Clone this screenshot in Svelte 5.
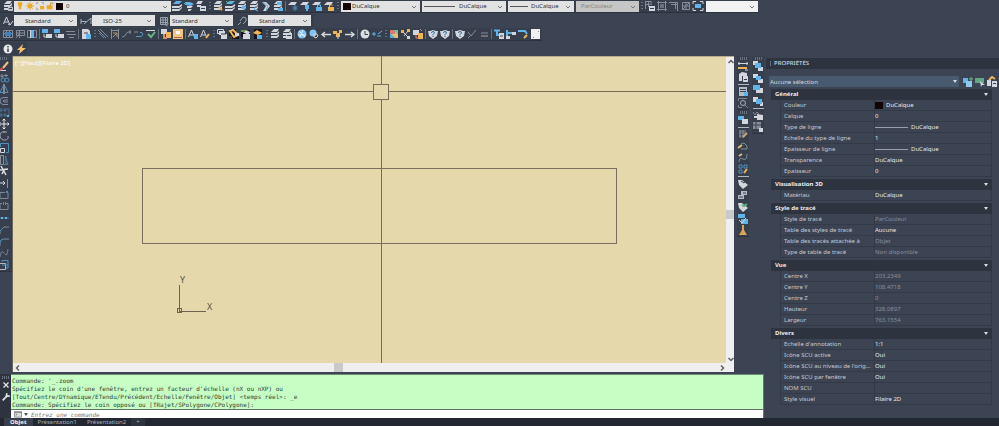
<script>
  const W = '#d3d6dc';
  const B = '#62b4e8';
  const Y = '#edb458';
  const G = '#858d9b';
  const D = '#3a4250';
  const f = (d, c = W) => `<path d="${d}" fill="${c}"/>`;
  const p = (d, c = W, w = 1) => `<path d="${d}" fill="none" stroke="${c}" stroke-width="${w}"/>`;

  const stack = f('M2 4 5 1h5L8 4zM2 5h6l2-2v2L8 7H2zM2 8h6l2-2v2l-2 2H2z');
  const sheet = f('M1 5 4 2h6L8 5z');
  const blueStack = f('M2 4 5 1h6L8 4z', B) + f('M1 6h7l3-2v2L8 8H1zM1 9h7l3-2v1l-3 3H1z');
  const shield = f('M1 3l2 0 3-1 3 1 2 0-1 5-4 3-4-3z') + p('M4.500 5q0-1.500 1.500-1.500T7.500 5L6 6.500v1M6 8v1', '#2f6fa0');
  const squares = (a, b) => f('M1 1h5v4H1z', a) + f('M6 7h5v4H6z', a) + f('M3 3h6v5H3z', b);

  const art = {
    layerProps: stack + f('M6 7h5v4H6z', '#b7bcc6') + p('M7 8.500h3', D),
    layerCur: blueStack,
    layerPrev: f('M2 2h5l4 2-3 2-5-1z', B) + f('M4 6h6L8 8H4zM5 9h4l-2 2H5z') + p('M1 3l2 2', B),
    layerState: f('M3 1h5L6 4H1zM2 5h4v2H2zM5 6h6v5H5z') + p('M6 8.500h4', D),
    layerEdit: stack + p('M7 7l3 3', Y, 2),
    layerMatch: blueStack + p('M2 1l2 2 3-2', '#62bf8d'),
    layerWalk: stack + p('M8 6l-2 3 4 2', B),
    layerBlue: stack + f('M7 5l3 2-2 3-3-2z', B),
    layerTurn: f('M2 2h4l4 4-4 5H3l3-5z') + p('M3 2l5 4-2 4', B),
    layerMerge: stack + f('M5 2h5v3H5zM6 8h5v3H6z', B),
    sheetFreeze: sheet + p('M8 5v6M5.500 6.500l5 3M10.500 6.500l-5 3', '#4c94c4'),
    sheetOff: sheet + f('M6 5h4v4H9v2H7V9H6z', B),
    sheetLock: sheet + p('M6.500 7V5h3v2', B) + f('M5 7h6v4H5z', B),
    sheetUnlock: sheet + p('M6.500 7V5h3', Y) + f('M5 7h6v4H5z', Y),
    refEdit: p('M1 1.500h6M1 4.500h5M1.500 1v8M4.500 1v6M7 1v4', G) + f('M5 6h6v5H5z') + p('M6 8.500h4', D),
    grid: p('M2.500 2.500h7v7h-7zM1 2.500h10M1 9.500h10M2.500 1v10M9.500 1v10', G) + f('M4 4h4v4H4z', '#69717f'),
    gridCorner: p('M1 2.500h9M3 4.500h7M9.500 2v9M7.500 2v7', G),
    gridX: p('M2.500 2.500h7v7h-7zM2 6h8M6 2v8M3 9l6-6', G),
    viewport: f('M3 4h6v4H3z', B) + p('M1 4V1.500h3M8 1.500h3V4M11 8v2.500H8M4 10.500H1V8'),
    textStyle: p('M1.500 9L4.500 2l3 7M3 7h3M6 9l2 1 3-4', W),
    textCheck: p('M1.500 9L4.500 2l3 7M3 7h3') + f('M7 6h4v5H7z', B),
    textPen: p('M1.500 9L4.500 2l3 7M3 7h3') + p('M7 10l3-4', Y, 2),
    dimStyle: p('M1 4v5M1 6.500h5M4 9l7-6v6', '#aeb4be'),
    tableStyle: p('M2.500 2.500h7v7h-7zM2 5h8M5 3v7M7.500 3v7M2 7.500h8', '#9ba2af') + p('M8 11l2-3', G, 2),
    mleader: p('M2 10l3-3M4 6l3-4 3 1v3L7 9', '#9ba2af'),
    table: p('M1.500 2.500h9v7h-9zM2 5.500h9M4.500 3v7M7.500 3v7', G) + f('M3 4h6v4H3z', '#3f83bb'),
    tablePen: p('M2.500 2.500h8v5h-8zM5.500 3v7M2 5h8M2 10l3-4', G),
    column: p('M1.500 2.500h9v7h-9z', G) + f('M5 2h3v8H5z', B) + p('M4.500 2v8'),
    blueBox: f('M1 1h6v4H1z', B) + f('M5 6h6v4H5z') + p('M3 6v3h2', W),
    list: p('M1 3.500h4M4 3.500h6M2 6.500h9M4 9.500h5', G),
    page: f('M2 1h6l2 2v8H2z') + p('M4 5h4', D) + f('M6 6h5v5H6z', B),
    diag: p('M1 2l8 8M3 1l8 8', G) + p('M2 5l5 5', '#4d91bf'),
    frame: p('M2.500 1v10M9.500 1v10M2 2.500h8', G) + p('M4 9l4-4M4 5h4v4', '#b3936b'),
    curve: p('M1 9Q4 9 5 6t5-2M9 2v4', G),
    arrowIn: p('M1 4h4', G) + p('M3 8.500h5q3-1 1-4H7', '#5d95bb'),
    abc: p('M1 2.500h9') + p('M3 6l3 3 4-5', '#64b883', 2),
    blockEdit: f('M1 1h6v5H1z') + f('M6 4h5v6H6z', Y) + p('M4 6v4h3', '#d58f70', 2),
    image: f('M1 1h10v10H1z', '#f1c684') + f('M4 3h4v3H4z', '#fff') + f('M2 9h8v1H2z', '#b26845'),
    pages: p('M1.500 1.500h6v4h-6z') + f('M3 3h6v4H3zM5 6h6v5H5z') + p('M5 6h5', D),
    pagesGold: f('M1 1h7v7H1zM4 8h7v3H4z', '#161616') + p('M2 3l3-1 5 5-4 2z', Y, 2) + f('M7 5h4v3H7z'),
    pagesGreen: f('M1 2h9v7H1z', '#161616') + f('M3 4l3-2 4 2-2 3zM3 6h7v5H3z') + f('M1 2h4v2H1z', '#6d9b50'),
    pagesBlue: f('M2 1h8v10H2z', '#161616') + f('M1 5l4-3 5 3-4 2z', Y) + f('M5 7h5v4H5z', B),
    cloud: stack,
    cloudBox: stack + f('M5 5h6v6H5z') + p('M6 7.500h4', D),
    globe: '<circle cx="6" cy="6" r="4.500" fill="#7fc4ee"/>' + p('M3 3l6 6M2 7h8M7 2L4 9', '#e5eef5'),
    globeLink: '<circle cx="5" cy="5" r="3.500" fill="#7fc4ee"/>' + p('M6 6l3 0 1 2-2 2-2-1z'),
    back: p('M11 6.500H2M5 4L2 6.500l3 2.500', W, 1.5),
    forward: p('M1 6.500h9M7 4l3 2.500-3 2.500', W, 1.5),
    flower: f('M1 3h4v3H1zM7 2h3v3H7zM4 5h4v4H4z', Y) + p('M6 8v3'),
    clock: '<circle cx="6" cy="6" r="4.500" fill="#dcdee2"/>' + p('M6 3v3.500h3', D),
    plusMinus: p('M1 6h4M3 4v4M6 8h4M7 6l4-3', B),
    gradient: f('M2 2h8v8H2z', '#e9bf6d') + f('M2 2h5v4H2z', '#db7771') + f('M2 5l5 5H2z', '#55aadf') + f('M6 2h4v5z', '#6dc695'),
    nodes: f('M1 2h3v3H1zM7 1h3v3H7z', Y) + p('M3 4l5 5M8 3L4 8') + f('M7 8h3v3H7z'),
    group: f('M1 2h6v5H1z') + f('M6 5h5v6H6z', Y) + p('M4 7v3h3M8 1l2 2', '#d9856f'),
    shield,
    slash: p('M2 4l3 4 5-6M2 10l2-2', G),
    equal: p('M3 5h7', G) + p('M3 8h7', '#b8a29b'),
    tree: p('M1 2.500h6M4 2v5h3', B, 2) + f('M6 5h5v6H6z') + p('M7 8h3', D),
    flow: p('M2 2v7M2 5h5', B, 2) + f('M7 4h4v3H7zM1 8h4v3H1z'),
    flowPen: p('M1 3h7l2 3', B, 2) + p('M7 10l3-3', Y, 2),
    sheetWhite: f('M2 1h9v10H2z', '#f0f0f0') + p('M9 3l1 1M4 10l1-1', G),
    info: '<circle cx="6" cy="6" r="4.500" fill="#e7e8eb"/>' + p('M6 3v1.500M6 5.500V9', D, 1.5),
    bolt: f('M8 1L2 7h3L4 11l7-6H7z', '#f5c06c'),
    pencil: p('M5 8l5-6', '#f2c27d', 2) + p('M2 10.500h6', W) + p('M2 10l3-2', '#d65345', 2),
    copy: p('M3 3h2v2H3zM8 2v3M6 3.500h4', G) + '<circle cx="5" cy="8" r="2" fill="none" stroke="#4d91bf"/><circle cx="9" cy="8" r="2" fill="none" stroke="#4d91bf"/>',
    mirror: p('M6 1v10', W) + p('M5 3L2 9.500h3M7 3l3 6.500H7', '#4d91bf'),
    offset: p('M10 2.500H5Q2 3 2 6t3 3.500h5M10 5H6q-2 1 0 2h4', '#7c91a8'),
    array: p('M2 2h2v2H2zM6 2h2v2H6zM2 7h2v2H2zM6 7h2v2H6zM9 2h2v7', '#4a7595') + f('M9 8h2v2H9z', B),
    move: p('M6 1v10M1 6h10M4.500 2.500L6 1l1.500 1.500M4.500 9.500L6 11l1.500-1.500M2.500 4.500L1 6l1.500 1.500M9.500 4.500L11 6l-1.500 1.500', '#e8e9ec'),
    rotate: p('M7 2Q2 1 2 6q1 4.500 5 4t3-4M5 2h4', '#9ea5b1'),
    scale: p('M2.500 6.500h4v4h-4z', W) + p('M2.500 5V1.500h8v9H8', '#4d91bf'),
    stretch: p('M2.500 1.500h3v9h-3z', '#8b93a0') + p('M7 2l3 8.500H5M8 2v8', '#4d7f9f'),
    trim: p('M3 1l5 9M2 5l8-1M6 5L4 9', '#e0e2e6', 1.5),
    extend: p('M2 6h5M5 4l2 2-2 2', W) + p('M9.500 2v9', '#7d9bb4'),
    breakPt: p('M7 3.500H2v6h8v-6', '#7f8795') + f('M8 2h2v2H8z', '#4d91bf'),
    breakGap: p('M4 3.500H2v6h8v-6H8', '#7f8795') + p('M5.500 2v3M7.500 2v3', '#4d91bf'),
    join: p('M1 6h10', '#4d7f9f') + f('M3 5h2v2H3zM7 5h2v2H7z', B),
    chamfer: p('M2 10V7', G) + p('M2 7l4-4', '#4d91bf') + p('M6 3h5', G),
    fillet: p('M2 10V7', G) + p('M2 7q0-4 4-4', '#4d91bf') + p('M6 3h5', G),
    blend: p('M2 10q1-7 3-5t3 3 2-6', '#6d8297'),
    explode: p('M1.500 4.500h6v6h-6z', '#b5bac4') + p('M4 3V1.500h6V9H8M4 6h6', '#4d91bf'),
    ruler: p('M1 3.500h10M2 2v3M10 2v3') + f('M1 7h9v2H1z', Y) + p('M8 10h3'),
    boxes: f('M2 3l3-2 5 1v3H5v5H2z') + f('M6 5h5v6H6z') + p('M7 8.500h3', D),
    sheetNote: f('M2 1h8v9H2z', '#b6bcc6') + p('M3 3.500h6M3 5.500h6', D) + f('M7 6h4v4H7z', B),
    lens: '<circle cx="6" cy="6" r="2.500" fill="none" stroke="#a9afba"/>' + p('M1.500 4V1.500H10M1.500 8v2.500H5M8 8l3 3', '#7c8492'),
    front: f('M1 2h6v4H1z', B) + f('M5 5h6v5H5z'),
    squaresA: squares(W, B),
    squaresB: f('M1 2h5v4H1zM6 7h5v4H6z') + f('M4 4h5v4H4z', B),
    squaresC: f('M4 5h7v5H4z') + f('M1 2h7v5H1z', B),
    squaresD: f('M1 2h5v5H1zM8 7h3v4H8z') + f('M4 4h6v5H4z', B),
    annot: p('M1 2l2 3 2-3 2 2', G) + f('M2 6h3V4l6 1v5H5V8H2z'),
    hatchBack: f('M1 1h8v7H1z', G) + p('M1 4h8M4 1v7', D) + f('M7 7h4v4H7z'),
    hatchPen: p('M2 3h7M2 5h7M2 8h6M3 2v8M6 2v8', G) + p('M6 9l4-4', '#c9a678', 2),
    polyPen: p('M4 9h6V6L7 3 4 4', G) + p('M1 8l4-3', '#e5b97d', 2),
    splinePen: p('M2 10q0-5 4-3t4-5', G) + p('M2 4l3-2', '#e5b97d', 2),
    arrayPen: p('M2 2h3v3H2zM7 2h3v3H7zM2 7h3v3H2z', '#4d91bf') + p('M7 10l3-4', Y, 2),
    tag: f('M1 2l4 0 6 5-5 4-4-4z') + p('M4 3l3 2 2-3', D),
    tagStack: f('M4 2h6v4H4zM1 6h6v4H1z', '#b5bac4') + p('M2 8h4M6 4h3', D),
    tagGreen: f('M1 2l4 0 6 5-5 4-4-4z') + p('M5 4l2 1 3-2', '#61b082', 2),
    sync: f('M1 1h7v4H1zM4 6h7v5H4z', B) + p('M2 7l3 3 4-5', W),
    broom: f('M5 1h2v5l3 5H2l3-5z', '#d9a455'),
    selAdd: f('M1 2h5v5H1z', B) + f('M4 5h6v6H4z', '#8cc9ee') + p('M9 1v4M7 3h4', '#64b883'),
    selPick: f('M1 2h9v5H1z', '#62a784') + f('M6 5l5 4-3 0-1 2z'),
    selQuick: p('M3 4l3-3 3 2', Y, 2) + f('M1 4h4v6H1zM6 5h5v6H6z') + p('M7 7.500h3', D),
    bulb: f('M3 4q0-3 3-3t3 3L7.500 7v3h-3V7z', '#eea92d'),
    sun: '<circle cx="6" cy="6" r="3" fill="#eea92d"/>' + p('M6 1v10M1 6h10M2.500 2.500l7 7M9.500 2.500l-7 7', '#eea92d'),
    vpFreeze: p('M2 4V2h2M8 2h2v2M2 8v2h2', '#8b8f96') + f('M6 6h5v4H6z', '#eea92d'),
    padlock: p('M6.500 5V2.500h3V4', '#c98a20') + f('M2 5h7v5H2z', '#eea92d'),
    close: p('M3 3l6 6M9 3L3 9', '#e3e5e9', 1.5),
    wrench: p('M2 10l5-5', '#e3e5e9', 2) + p('M7 1.500L6.500 5 10.500 5', '#e3e5e9', 2),
    prompt: '<rect x="1.500" y="2.500" width="9" height="7" fill="#ddd" stroke="#777"/>' + p('M1 3h10M3 5l1.500 1L3 7', '#666'),
    up: p('M3.500 7L6 4.500 8.500 7', '#606060', 1.5),
    down: p('M3.500 5L6 7.500 8.500 5', '#606060', 1.5),
    left: p('M7 3.500L4.500 6 7 8.500', '#606060', 1.5),
    right: p('M5 3.500L7.500 6 5 8.500', '#606060', 1.5)
  };

  // "|" draws a separator and ":" a drag grip between tool buttons
  const layerTools = 'layerCur layerPrev layerState : layerEdit layerMatch layerBlue layerWalk layerTurn layerMerge | sheetFreeze sheetOff sheetLock sheetUnlock :'.split(' ');
  const refTools = ': refEdit grid gridCorner gridX viewport'.split(' ');
  const mainTools = 'table tablePen column | blueBox blueBox list | page : diag frame curve arrowIn abc | blockEdit image | textCheck textPen : pages pagesGold pagesGreen pagesBlue : cloud cloudBox | globe globeLink back flower forward | clock plusMinus : gradient nodes group | shield shield | shield slash equal | tree flow flowPen sheetWhite'.split(' ');
  const modifyTools = 'pencil copy mirror offset array move rotate scale stretch trim extend breakPt breakGap join chamfer fillet blend explode'.split(' ');
  const inquiryTools = 'ruler boxes | sheetNote lens'.split(' ');
  const editTools = 'front | hatchPen polyPen splinePen arrayPen | tag tagStack tagGreen sync broom'.split(' ');
  const orderTools = 'squaresA squaresB squaresC squaresD | annot hatchBack'.split(' ');

  const styles = [
    { icon: 'textStyle', kind: 'style', value: 'Standard', label: 'Style de texte' },
    { icon: 'dimStyle', kind: 'style', value: 'ISO-25', label: 'Style de cote' },
    { icon: 'tableStyle', kind: 'style tight', value: 'Standard', label: 'Style de tableau' },
    { icon: 'mleader', kind: 'style', value: 'Standard', label: 'Style de ligne de repère' }
  ];

  const groups = [
    { title: 'Général', rows: [
      ['Couleur', 'DuCalque', 'swatch'],
      ['Calque', '0'],
      ['Type de ligne', 'DuCalque', 'line'],
      ['Echelle du type de ligne', '1'],
      ['Epaisseur de ligne', 'DuCalque', 'line'],
      ['Transparence', 'DuCalque'],
      ['Epaisseur', '0']
    ] },
    { title: 'Visualisation 3D', rows: [['Matériau', 'DuCalque']] },
    { title: 'Style de tracé', rows: [
      ['Style de tracé', 'ParCouleur', 'dim'],
      ['Table des styles de tracé', 'Aucune'],
      ['Table des tracés attachée à', 'Objet', 'dim'],
      ['Type de table de tracé', 'Non disponible', 'dim']
    ] },
    { title: 'Vue', rows: [
      ['Centre X', '203.2349', 'dim'],
      ['Centre Y', '108.4718', 'dim'],
      ['Centre Z', '0', 'dim'],
      ['Hauteur', '328.0897', 'dim'],
      ['Largeur', '763.1554', 'dim']
    ] },
    { title: 'Divers', rows: [
      ["Echelle d'annotation", '1:1'],
      ['Icône SCU active', 'Oui'],
      ["Icône SCU au niveau de l'orig...", 'Oui'],
      ['Icône SCU par fenêtre', 'Oui'],
      ['NOM SCU', ''],
      ['Style visuel', 'Filaire 2D']
    ] }
  ];

  const log = [
    "Commande: '_.zoom",
    "Spécifiez le coin d'une fenêtre, entrez un facteur d'échelle (nX ou nXP) ou",
    '[Tout/Centre/DYnamique/ETendu/Précédent/Echelle/Fenêtre/Objet] <temps réel>: _e',
    'Commande: Spécifiez le coin opposé ou [TRajet/SPolygone/CPolygone]:'
  ];
</script>

{#snippet icon(name)}
  <svg class="icon" viewBox="0 0 12 12" aria-hidden="true">{@html art[name]}</svg>
{/snippet}

{#snippet tools(list)}
  {#each list as name}
    {#if name === '|'}
      <span class="sep"></span>
    {:else if name === ':'}
      <span class="grip"></span>
    {:else}
      <button class="tool" aria-label={name}>{@render icon(name)}</button>
    {/if}
  {/each}
{/snippet}

{#snippet combo(kind, label, value)}
  <div class="combo {kind}">
    {#if kind === 'layer'}
      <span class="marks">
        {@render icon('bulb')}{@render icon('sun')}{@render icon('vpFreeze')}{@render icon('padlock')}<i class="swatch"></i>
      </span>
    {:else if kind === 'color'}
      <span class="marks"><i class="swatch"></i></span>
    {:else if kind === 'ltype' || kind === 'lweight'}
      <span class="marks"><i class="rule"></i></span>
    {/if}
    <select aria-label={label} disabled={kind === 'plot'}><option>{value}</option></select>
    <svg class="chevron" viewBox="0 0 6 4" aria-hidden="true"><path d="M1 1l2 2 2-2" /></svg>
  </div>
{/snippet}

<div class="app">
  <header>
    <div class="bar first">
      <button class="tool" aria-label="Gestionnaire des calques">{@render icon('layerProps')}</button>
      {@render combo('layer', 'Calque', '0')}
      {@render tools(layerTools)}
      {@render combo('color', 'Couleur', 'DuCalque')}
      {@render combo('ltype', 'Type de ligne', 'DuCalque')}
      {@render combo('lweight', 'Epaisseur de ligne', 'DuCalque')}
      {@render combo('plot', 'Style de tracé', 'ParCouleur')}
      {@render tools(refTools)}
      {@render combo('blank', 'Référence', '')}
    </div>
    <div class="bar second">
      {#each styles as s}
        <button class="tool" aria-label={s.label}>{@render icon(s.icon)}</button>
        {@render combo(s.kind, s.label, s.value)}
      {/each}
    </div>
    <div class="bar third">{@render tools(mainTools)}</div>
    <div class="bar fourth">{@render tools(['info', 'bolt'])}</div>
  </header>

  <main>
    <div class="work">
      <div class="stage">
        <nav class="column modify" aria-label="Modification"><span class="dots"></span>{@render tools(modifyTools)}</nav>
        <div class="viewport">
          <div class="model">
            <svg class="drawing" viewBox="0 0 713 307" preserveAspectRatio="xMinYMin meet">
              <text class="view" x="2" y="9">[−][Haut][Filaire 2D]</text>
              <path class="cross" d="M0 35.500h360M376 35.500h337M368.500 0v28M368.500 43v264M360.500 28.500h15v15h-15z" />
              <path class="shape" d="M129.500 112.500h474v75h-474z" />
              <path class="ucs" d="M166.500 229v26h26M164.500 252.500h4v4h-4z" />
              <text class="axis" x="167" y="227">Y</text>
              <text class="axis" x="194" y="254">X</text>
            </svg>
            <div class="scroll vertical">
              <button aria-label="Haut">{@render icon('up')}</button><i class="before"></i><i class="thumb"></i><i class="after"></i><button aria-label="Bas">{@render icon('down')}</button>
            </div>
          </div>
          <div class="scroll horizontal">
            <button aria-label="Gauche">{@render icon('left')}</button><i class="before"></i><i class="thumb"></i><i class="after"></i><button aria-label="Droite">{@render icon('right')}</button>
          </div>
        </div>
        <div class="docks">
          <nav class="column inquiry" aria-label="Renseignements"><span class="dots"></span>{@render tools(inquiryTools)}</nav>
          <nav class="column edit" aria-label="Modification II"><span class="dots"></span>{@render tools(editTools)}</nav>
        </div>
        <div class="docks">
          <nav class="column order" aria-label="Ordre de tracé"><span class="dots"></span>{@render tools(orderTools)}</nav>
        </div>
      </div>

      <section class="console" aria-label="Ligne de commande">
        <div class="handle">
          <span class="dots"></span>
          <button class="tool" aria-label="Fermer">{@render icon('close')}</button>
          <button class="tool" aria-label="Personnaliser">{@render icon('wrench')}</button>
        </div>
        <div class="history">
          <div class="log">{#each log as line}<p>{line}</p>{/each}</div>
          <div class="entry">
            {@render icon('prompt')}<i class="caret"></i>
            <input aria-label="Commande" placeholder="Entrez une commande" />
          </div>
        </div>
      </section>
    </div>

    <aside>
      <h1>PROPRIÉTÉS</h1>
      <div class="selection">
        <div class="pick">
          <select aria-label="Sélection"><option>Aucune sélection</option></select>
          <i class="caret"></i>
        </div>
        {@render tools(['selAdd', 'selPick', 'selQuick'])}
      </div>
      {#each groups as g}
        <section class="group">
          <h2>{g.title}<i class="caret"></i></h2>
          <table>
            <tbody>
              {#each g.rows as [name, value, kind]}
                <tr>
                  <th scope="row">{name}</th>
                  <td class:dim={kind === 'dim'}>
                    {#if kind === 'swatch'}<i class="swatch"></i>{/if}{#if kind === 'line'}<i class="rule"></i>{/if}{value}
                  </td>
                </tr>
              {/each}
            </tbody>
          </table>
        </section>
      {/each}
    </aside>
  </main>

  <footer>
    <button class="tab current">Objet</button>
    <button class="tab">Présentation1</button>
    <button class="tab">Présentation2</button>
    <button class="tab add" aria-label="Nouvelle présentation">+</button>
  </footer>
</div>

<style>
  :global(body) { background: #3c4453; }
  * { box-sizing: border-box; }
  .app {
    display: flex;
    flex-direction: column;
    height: 100vh;
    overflow: hidden;
    background: #3c4453;
    color: #d5d8de;
    font: 6px/8px "Noto Sans", "Open Sans", sans-serif;
  }
  button, select, input {
    margin: 0;
    padding: 0;
    border: 0;
    border-radius: 0;
    background: none;
    color: inherit;
    font: inherit;
  }
  i { display: block; flex: none; }
  .icon { display: block; flex: none; width: 12px; height: 12px; }
  .tool { display: flex; flex: none; align-items: center; justify-content: center; width: 12px; height: 12px; }
  .swatch { width: 8px; height: 7px; background: #120305; }
  .caret { border: 2px solid transparent; border-top: 3px solid #d9dce1; border-bottom: 0; }

  header { display: flex; flex-direction: column; align-items: flex-start; flex: none; height: 56px; gap: 1px; }
  .bar { display: flex; align-items: center; height: 13px; background: #373f4d; border-bottom: 1px solid #2b313d; }
  .first { padding-left: 2px; }
  .second { padding-left: 2px; border-bottom: 0; }
  .third { padding: 0 1px 0 2px; }
  .fourth { padding: 0 0 0 2px; border-bottom: 0; gap: 1px; }
  .bar .sep { width: 1px; height: 10px; margin: 0 1px; background: #697180; }
  .grip { flex: none; width: 2px; height: 9px; margin: 0 1px 0 2px; background: repeating-linear-gradient(#697180 0 1px, transparent 1px 3px); }
  .combo { position: relative; flex: none; height: 11px; background: #e2e2e2; color: #333; }
  .combo select { display: block; width: 100%; height: 11px; padding-left: 11px; appearance: none; opacity: 1; }
  .marks { position: absolute; inset: 0 auto 0 2px; display: flex; align-items: center; pointer-events: none; }
  .chevron { position: absolute; right: 3px; top: 4px; width: 6px; height: 4px; fill: none; stroke: #777; pointer-events: none; }
  .layer { width: 157px; }
  .layer select { padding-left: 52px; }
  .layer .marks { left: 1px; }
  .layer .marks .icon { width: 10px; height: 10px; }
  .layer .swatch { width: 7px; margin-left: 1px; }
  .color { width: 79px; margin: 0 2px 0 1px; }
  .ltype { width: 84px; margin-right: 2px; }
  .lweight { width: 66px; margin-right: 2px; }
  .ltype select { padding-left: 37px; }
  .lweight select { padding-left: 23px; }
  .combo .rule { height: 1px; background: #555; }
  .ltype .rule { width: 31px; }
  .lweight .rule { width: 18px; }
  .plot { width: 63px; background: #c6c6c6; color: #858585; }
  .plot select { padding-left: 5px; }
  .blank { width: 52px; margin-left: 2px; background: #f2f2f2; }
  .style { width: 63px; margin-right: 3px; }
  .style.tight select { padding-left: 2px; }

  main { display: flex; flex: 1; min-height: 0; }
  .work { display: flex; flex: 1; flex-direction: column; min-width: 0; }
  .stage { display: flex; flex: 1; min-height: 0; }
  .column { display: flex; flex-direction: column; align-items: center; width: 12px; padding-top: 4px; background: #373f4d; border-bottom: 1px solid #2d3440; }
  .column .dots { margin-top: -3px; }
  .column .tool { flex: 1; min-height: 0; }
  .column .sep { width: 11px; height: 1px; margin: 1px 0; background: #b4b8c0; }
  .dots { flex: none; width: 7px; height: 3px; background: repeating-linear-gradient(90deg, #697180 0 1px, transparent 1px 2px); }
  .modify { height: 216px; align-items: flex-start; }
  .modify .tool { margin-left: -2px; }
  .docks { width: 12px; margin-left: 3px; }
  .inquiry { height: 54px; }
  .edit { height: 127px; }
  .order { height: 78px; }
  .viewport { display: flex; flex: 1; flex-direction: column; min-width: 0; border-left: 1px solid #6b675c; }
  .model { display: flex; flex: 1; min-height: 0; background: #e5d8ab; border-top: 1px solid #b9ae8b; }
  .drawing { flex: 1; min-width: 0; margin-top: -1px; }
  .drawing path { fill: none; stroke-width: 1; shape-rendering: crispEdges; }
  .cross { stroke: #766e59; }
  .shape { stroke: #786f5e; }
  .ucs { stroke: #6c6450; }
  .view { fill: #fff; font-size: 6px; }
  .axis { fill: #5c5544; font-size: 9px; }
  .scroll { display: flex; flex: none; background: #efefef; }
  .scroll button { display: flex; align-items: center; justify-content: center; flex: none; width: 9px; height: 9px; }
  .vertical { flex-direction: column; width: 8px; }
  .horizontal { height: 9px; padding-right: 8px; }
  .thumb { width: 9px; height: 9px; background: #c9c9c9; }
  .vertical .thumb { width: 8px; }
  .vertical .before { flex: 145; }
  .vertical .after { flex: 135; }
  .horizontal .before { flex: 311; }
  .horizontal .after { flex: 373; }

  .console { display: flex; flex: none; height: 47px; padding-top: 2px; }
  .handle { display: flex; flex-direction: column; align-items: center; width: 11px; padding-top: 2px; background: #2d3440; }
  .handle .tool .icon { width: 10px; height: 10px; }
  .history { display: flex; flex: 1; flex-direction: column; min-width: 0; font: 6px/8px "DejaVu Sans Mono", "Liberation Mono", monospace; border-right: 1px solid #68757a; }
  .log { flex: 1; padding: 2px 1px 0; background: #c6fec4; border-top: 1px solid #6c8c78; color: #2c4233; }
  .log p { margin: 0; white-space: pre; }
  .entry { display: flex; align-items: center; height: 10px; padding-left: 1px; background: #fff; border-top: 1px solid #637069; }
  .entry .icon { height: 9px; }
  .entry .caret { border-top-color: #555; }
  .entry input { flex: 1; min-width: 0; height: 9px; padding-left: 3px; color: #333; font-style: italic; outline: 0; }
  .entry input::placeholder { color: #777; opacity: 1; }

  aside { flex: none; width: 235px; padding: 2px 0 0 2px; }
  h1, h2 { margin: 0; font-size: 6px; line-height: 11px; }
  h1 { padding-left: 8px; background: linear-gradient(90deg, transparent 4px, #697180 4px 5px, transparent 5px) 0 3px / 100% 5px no-repeat, #2d3440; font-weight: 500; }
  .selection { display: flex; align-items: center; height: 11px; margin: 7px 1px 2px 3px; }
  .pick { position: relative; flex: 1; height: 11px; margin-right: 3px; background: #485a6e; }
  .pick select { display: block; width: 100%; height: 11px; padding-left: 1px; appearance: none; }
  .pick .caret { position: absolute; right: 2px; top: 4px; pointer-events: none; }
  .group { margin: 0 7px 2px 5px; }
  h2 { display: flex; align-items: center; justify-content: space-between; padding: 0 4px; background: #2d3440; color: #eceef1; font-weight: 700; }
  table { width: calc(100% - 9px); margin-left: 9px; border-collapse: separate; border-spacing: 0; table-layout: fixed; }
  th, td { height: 11px; padding: 0 3px; border-bottom: 1px solid #323947; border-left: 1px solid #323947; line-height: 10px; font-weight: 400; text-align: left; white-space: nowrap; }
  th { width: 94px; color: #c6cad2; }
  td { padding-left: 0; border-right: 1px solid #323947; color: #e4e6ea; }
  td.dim { color: #858d9a; }
  td .swatch, td .rule { display: inline-block; margin-right: 3px; vertical-align: middle; }
  td .rule { width: 33px; height: 1px; background: #9aa0ab; }

  footer { display: flex; flex: none; height: 8px; margin-top: -1px; padding-left: 4px; background: #222732; }
  .tab { height: 8px; padding: 0 6px; line-height: 8px; color: #a9aeb8; }
  .tab + .tab { padding: 0 5px; }
  .tab.current { background: #373f4d; color: #f0f1f3; font-weight: 700; }
  .tab.add { background: #2d3440; }
</style>
